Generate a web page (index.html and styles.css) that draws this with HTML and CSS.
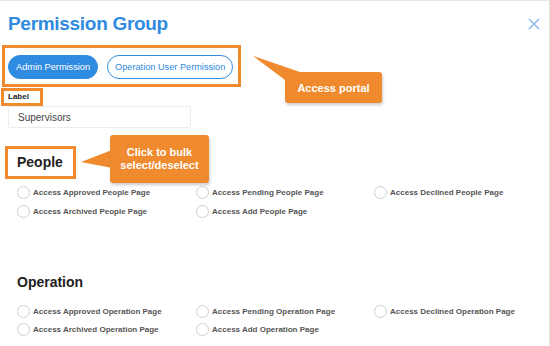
FILE: index.html
```html
<!DOCTYPE html>
<html lang="en">
<head>
    <meta charset="UTF-8">
    <meta name="viewport" content="width=device-width, initial-scale=1">
    <title>Permission Group</title>
    <link rel="stylesheet" href="styles.css">
</head>
<body>
    <div class="modal">
        <div class="modal-head">
            <h1 class="title">Permission Group</h1>
            <button class="close" aria-label="close">
                <svg width="12" height="12" viewBox="0 0 12 12"><path d="M1 1L11 11M11 1L1 11" stroke="#8dc0f2" stroke-width="1.6"/></svg>
            </button>
        </div>

        <div class="tabs mark">
            <button class="pill pill-on">Admin Permission</button>
            <button class="pill">Operation User Permission</button>
        </div>

        <div class="field">
            <span class="label mark">Label</span>
            <input class="text-input" type="text" value="Supervisors">
        </div>

        <div class="group">
            <h2 class="group-title mark">People</h2>
            <div class="checks">
                <label class="check"><span class="radio"></span>Access Approved People Page</label>
                <label class="check"><span class="radio"></span>Access Pending People Page</label>
                <label class="check"><span class="radio"></span>Access Declined People Page</label>
                <label class="check"><span class="radio"></span>Access Archived People Page</label>
                <label class="check"><span class="radio"></span>Access Add People Page</label>
            </div>
        </div>

        <div class="group group-op">
            <h2 class="group-title">Operation</h2>
            <div class="checks">
                <label class="check"><span class="radio"></span>Access Approved Operation Page</label>
                <label class="check"><span class="radio"></span>Access Pending Operation Page</label>
                <label class="check"><span class="radio"></span>Access Declined Operation Page</label>
                <label class="check"><span class="radio"></span>Access Archived Operation Page</label>
                <label class="check"><span class="radio"></span>Access Add Operation Page</label>
            </div>
        </div>
    </div>

    <!-- annotation callouts -->
    <svg class="pointers" width="550" height="346">
        <polygon points="253,56 300,72 285,80" fill="#f08a2e"/>
        <polygon points="81,162 112,150 112,168" fill="#f08a2e"/>
    </svg>
    <div class="callout callout-portal">Access portal</div>
    <div class="callout callout-bulk">Click to bulk select/deselect</div>
</body>
</html>
```

FILE: styles.css
```css
body {
    margin: 0;
    background: #fff;
    font-family: "Liberation Sans", Arial, sans-serif;
    color: #222;
}
.modal {
    height: 346px;
    box-sizing: border-box;
    border-top: 1px solid #e6e6e6;
    border-right: 1px solid #e6e6e6;
    padding: 0 0 0 8px;
}
.modal-head {
    display: flex;
    justify-content: space-between;
    align-items: center;
    height: 44px;
    padding-right: 9px;
}
.title {
    margin: 2px 0 0;
    font-size: 19px;
    letter-spacing: -0.3px;
    font-weight: bold;
    color: #2f8be0;
}
.close {
    border: 0;
    background: none;
    padding: 0;
    margin-top: 2px;
    display: flex;
}
/* orange annotation frame */
.mark {
    outline: 3px solid #f08a2e;
}
.tabs {
    display: inline-flex;
    gap: 9px;
    margin: 3px 0 0 -3px;
    padding: 7px 5px 5px 3px;
}
.pill {
    height: 24px;
    border-radius: 12px;
    border: 1px solid #2f8be0;
    background: #fff;
    color: #2f8be0;
    font-family: inherit;
    font-size: 9.2px;
    padding: 0 7px;
}
.pill-on {
    background: #2f8be0;
    color: #fff;
}
.field {
    display: flex;
    flex-direction: column;
    align-items: flex-start;
    margin-top: 7px;
}
.label {
    font-size: 8px;
    font-weight: bold;
    color: #222;
    margin-left: -4px;
    padding: 1px 11px 1px 4px;
    line-height: 10px;
}
.text-input {
    margin-top: 3px;
    width: 183px;
    height: 22px;
    box-sizing: border-box;
    border: 1px solid #ececec;
    border-radius: 2px;
    padding: 0 9px;
    font-family: inherit;
    font-size: 10px;
    color: #444;
}
.group {
    margin-top: 21px;
}
.group-title {
    display: inline-block;
    margin: 0;
    font-size: 14px;
    font-weight: bold;
    color: #222;
    padding: 5px 10px 6px 9px;
}
.group-op {
    margin-top: 51px;
}
.checks {
    display: grid;
    grid-template-columns: 179px 178px 1fr;
    row-gap: 6px;
    padding: 10px 0 0 9px;
}
.group-op .checks {
    padding-top: 9px;
    row-gap: 5px;
}
.check {
    display: flex;
    align-items: center;
    gap: 3px;
    font-size: 8px;
    font-weight: bold;
    color: #555;
    height: 13px;
}
.radio {
    width: 11px;
    height: 11px;
    border: 1px solid #cfcfcf;
    border-radius: 50%;
    flex: none;
}
.pointers {
    position: absolute;
    left: 0;
    top: 0;
    pointer-events: none;
}
.callout {
    position: absolute;
    background: #f08a2e;
    color: #fff;
    font-weight: bold;
    font-size: 11px;
    text-align: center;
    border-radius: 3px;
    box-shadow: 1px 2px 3px rgba(0, 0, 0, 0.2);
    display: flex;
    align-items: center;
    justify-content: center;
}
.callout-portal {
    left: 285px;
    top: 72px;
    width: 97px;
    height: 31px;
}
.callout-bulk {
    left: 110px;
    top: 135px;
    width: 99px;
    height: 48px;
    line-height: 13px;
    padding: 0 8px;
    box-sizing: border-box;
}
```
